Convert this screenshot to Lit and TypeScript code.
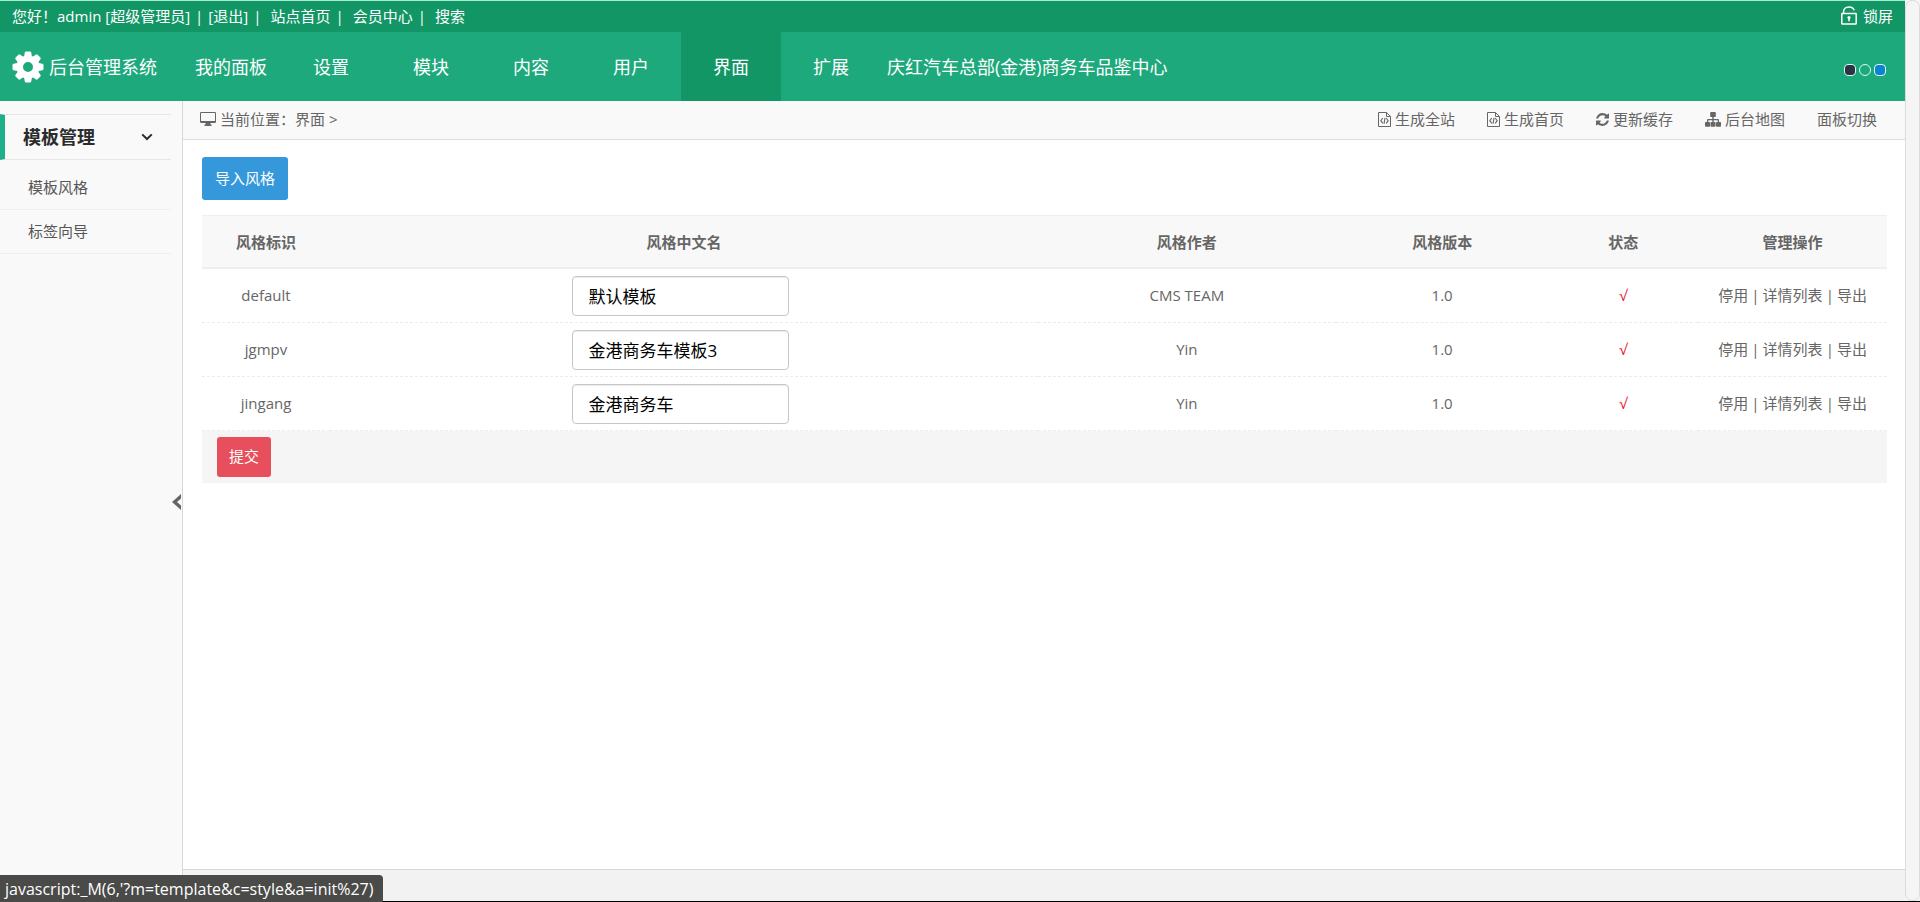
import { LitElement, html, css, svg } from "lit";
import { customElement, state } from "lit/decorators.js";
import { classMap } from "lit/directives/class-map.js";

interface StyleRow {
  id: string;
  name: string;
  author: string;
  version: string;
}

const NAV = ["我的面板", "设置", "模块", "内容", "用户", "界面", "扩展", "庆红汽车总部(金港)商务车品鉴中心"];

const ROWS: StyleRow[] = [
  { id: "default", name: "默认模板", author: "CMS TEAM", version: "1.0" },
  { id: "jgmpv", name: "金港商务车模板3", author: "Yin", version: "1.0" },
  { id: "jingang", name: "金港商务车", author: "Yin", version: "1.0" },
];

const TEETH = [0, 45, 90, 135, 180, 225, 270, 315];

const gearIcon = html`<svg class="gear" viewBox="0 0 32 32" aria-hidden="true">
  <g fill="currentColor">
    ${TEETH.map((a) => svg`<path transform="rotate(${a} 16 16)" d="M11.800 7 12.800 1.400Q13 .5 14 .5H18Q19 .5 19.200 1.400L20.200 7Z"/>`)}
    <path fill-rule="evenodd" d="M16 4.400a11.600 11.600 0 1 0 0 23.200 11.600 11.600 0 0 0 0-23.200Zm0 6.600a5 5 0 1 1 0 10 5 5 0 0 1 0-10Z"/>
  </g>
</svg>`;

const lockIcon = html`<svg class="lock" viewBox="0 0 16 19" aria-hidden="true">
  <g fill="none" stroke="currentColor" stroke-width="1.500">
    <path d="M2.500 8V6C2.500 3 4.800 1 8 1c2.600 0 4.600 1.300 5.200 3.400"/>
    <rect x=".8" y="7.500" width="14.400" height="10.500" rx=".6"/>
  </g>
  <circle cx="8" cy="11.600" r="1.600" fill="currentColor"/>
  <path d="M7.200 12h1.600v3.200H7.200z" fill="currentColor"/>
</svg>`;

const monitorIcon = html`<svg class="icon-wide" viewBox="0 0 16 14" aria-hidden="true">
  <path fill="currentColor" fill-rule="evenodd" d="M1.200 0h13.600Q16 0 16 1.200v8.600Q16 11 14.800 11H10.500v1.500h1V14h-7v-1.500h1V11H1.200Q0 11 0 9.800V1.200Q0 0 1.200 0ZM1 1v8h14V1Z"/>
</svg>`;

const codeIcon = html`<svg class="icon-file" viewBox="0 0 13 15" aria-hidden="true">
  <g fill="none" stroke="currentColor">
    <path d="M.5.5h8l4 4v10H.5Z"/>
    <path d="M8.500.5v4h4"/>
    <path d="M4.800 6 2.800 8.700l2 2.700M8.200 6l2 2.700-2 2.700M7 5.800 6 11.800" stroke-width="1.100"/>
  </g>
</svg>`;

const refreshIcon = html`<svg class="icon-file" viewBox="0 0 1536 1536" aria-hidden="true">
  <path fill="currentColor" d="M1511 928q0 5-1 7-64 268-268 434.500T764 1536q-146 0-282.500-55T238 1324l-129 129q-19 19-45 19t-45-19-19-45V960q0-26 19-45t45-19h448q26 0 45 19t19 45-19 45l-137 137q71 66 161 102t187 36q134 0 250-65t186-179q11-17 53-117 8-23 30-23h192q13 0 22.500 9.500t9.500 22.500zm25-800v448q0 26-19 45t-45 19h-448q-26 0-45-19t-19-45 19-45l138-138Q969 256 768 256q-134 0-250 65T332 500q-11 17-53 117-8 23-30 23H50q-13 0-22.500-9.500T18 608v-7q65-268 270-434.500T768 0q146 0 284 55.500T1297 212l130-129q19-19 45-19t45 19 19 45z"/>
</svg>`;

const sitemapIcon = html`<svg class="icon-tree" viewBox="0 0 16 15" aria-hidden="true">
  <path fill="currentColor" d="M6 0h4q.8 0 .8.8v3.400q0 .8-.8.8H8.700v2H13q1 0 1 1v2h1.200q.8 0 .8.8v3.200q0 .8-.8.8h-3.400q-.8 0-.8-.8v-3.200q0-.8.8-.8h.9V8.300H8.700V10h1q.8 0 .8.8v3.200q0 .8-.8.8H6.300q-.8 0-.8-.8v-3.200q0-.8.8-.8h1V8.300h-4V10h.9q.8 0 .8.8v3.200q0 .8-.8.8H.8Q0 14.800 0 14v-3.200Q0 10 .8 10H2V8q0-1 1-1h4.300V5H6q-.8 0-.8-.8V.8Q5.200 0 6 0Z"/>
</svg>`;

@customElement("app-root")
export class AppRoot extends LitElement {
  @state() private active = 5;

  static styles = css`
    :host {
      display: flex;
      flex-direction: column;
      box-sizing: border-box;
      min-height: 100vh;
      border-bottom: 1px solid #000;
      background: #f5f5f6;
      color: #666;
      font: 15px/20px "Open Sans", "Noto Sans CJK SC", sans-serif;
    }
    * { box-sizing: border-box; }
    a { color: inherit; text-decoration: none; }
    svg { display: block; flex: none; }
    button, input { font-family: inherit; }

    .shell { flex: 1; display: flex; }
    .page { flex: 1; min-width: 0; display: flex; flex-direction: column; }
    .scroll {
      width: 15px;
      border: 1px solid #dcdcdc;
      border-radius: 7px;
      background: #f5f5f5;
    }

    .top {
      display: flex;
      align-items: center;
      height: 32px;
      padding: 0 12px 2px;
      border-top: 1px solid #a5ebcf;
      background: #139666;
      color: #fff;
    }
    .top-links { display: flex; gap: 5px; white-space: pre; }
    .top-links .wide { margin-left: 4px; }
    .lock-link { margin-left: auto; display: flex; align-items: center; gap: 6px; }
    .lock { width: 16px; height: 19px; }

    .head {
      display: flex;
      align-items: stretch;
      height: 69px;
      background: #1ea97c;
      color: #fff;
      font-size: 18px;
    }
    .brand { width: 181px; display: flex; align-items: center; gap: 5px; padding-left: 12px; }
    .gear { width: 32px; height: 32px; }
    .nav { display: flex; }
    .nav a {
      min-width: 100px;
      padding: 0 6px;
      display: flex;
      align-items: center;
      justify-content: center;
      white-space: nowrap;
    }
    .nav .on { background: #139666; }
    .skins { margin-left: auto; display: flex; align-items: center; gap: 3px; padding: 6px 19px 0 0; }
    .skin {
      width: 12px;
      height: 12px;
      padding: 0;
      border: 1px solid #d5fff0;
      border-radius: 4px;
      background: #2b3346;
    }
    .skin.green { border-radius: 50%; background: #1ea97c; }
    .skin.blue { background: #0d82d0; }

    .body { flex: 1; display: flex; }
    .side {
      position: relative;
      width: 183px;
      padding-top: 13px;
      border-right: 1px solid #d8d8d8;
      background: #f9f9f9;
    }
    .side-title {
      width: 171px;
      height: 46px;
      margin: 0;
      padding: 0 18px;
      display: flex;
      align-items: center;
      justify-content: space-between;
      border: solid #e6e6e6;
      border-width: 1px 0;
      border-left: 5px solid #1fb08a;
      color: #2b2b2b;
      font-size: 18px;
    }
    .side-list { width: 171px; margin: 0; padding: 6px 0 0; list-style: none; }
    .side-list a {
      display: flex;
      align-items: center;
      height: 44px;
      padding: 0 0 2px 28px;
      border-bottom: 1px solid #efefef;
      color: #555;
    }
    .chev { width: 12px; height: 8px; }
    .fold {
      position: absolute;
      right: 1px;
      top: calc(50% - 7px);
      padding: 0;
      border: 0;
      background: none;
      color: #666;
    }

    .main { flex: 1; min-width: 0; display: flex; flex-direction: column; background: #fff; }
    .crumbs {
      display: flex;
      align-items: center;
      height: 39px;
      padding: 0 28px 2px 17px;
      border-bottom: 1px solid #dcdcdc;
      background: #f9f9f9;
    }
    .where { display: flex; align-items: center; gap: 4px; }
    .tools { margin-left: auto; display: flex; gap: 32px; }
    .tools a { display: flex; align-items: center; gap: 4px; }
    .icon-wide { width: 16px; height: 14px; }
    .icon-file { width: 13px; height: 15px; }
    .icon-tree { width: 16px; height: 15px; }

    .content { flex: 1; padding: 17px 18px 17px 19px; }
    .btn {
      display: block;
      border: 0;
      border-radius: 3px;
      color: #fff;
      font-size: 15px;
      line-height: 20px;
    }
    .btn.import { height: 43px; padding: 0 13px 2px; margin-bottom: 15px; background: #3498db; }
    .btn.submit { height: 40px; padding: 0 12px 2px; background: #e84f5c; }

    table { width: 100%; border-collapse: separate; border-spacing: 0; table-layout: fixed; text-align: center; }
    .c1 { width: 7.6%; }
    .c2 { width: 42%; }
    .c3 { width: 17.7%; }
    .c4 { width: 12.6%; }
    .c5 { width: 8.9%; }
    .c6 { width: 11.2%; }
    th, td { height: 54px; padding: 0; }
    th {
      border-top: 1px solid #efefef;
      border-bottom: 2px solid #efefef;
      background: #f8f8f8;
    }
    td { padding-bottom: 2px; border-bottom: 1px dashed #ececec; }
    td.edit { padding-bottom: 0; }
    .ok { color: #e6212f; }
    .ops { display: flex; justify-content: center; gap: 3px; }
    .field {
      display: inline-block;
      width: 217px;
      height: 40px;
      margin-right: 6px;
      padding: 0 15px;
      border: 1px solid #c3c7ca;
      border-radius: 4px;
      box-shadow: inset 0 1px 1px rgba(0, 0, 0, 0.08);
      background: #fff;
      color: #000;
      font-size: 17px;
      vertical-align: middle;
    }
    tfoot td { height: 52px; padding: 0 0 0 15px; border: 0; background: #f5f5f5; }

    .foot { height: 32px; border-top: 1px solid #d6d6d6; background: #f2f2f2; }
    .status {
      position: fixed;
      left: 0;
      bottom: 0;
      height: 27px;
      padding: 4px 10px 0 5px;
      border-top-right-radius: 4px;
      background: #4a4a48;
      color: #fff;
      font-size: 16px;
      white-space: nowrap;
    }
  `;

  render() {
    return html`
      <div class="shell">
        <div class="page">
          <div class="top">
            <div class="top-links"><span>您好！admin [超级管理员]</span><span>|</span><a href="#">[退出]</a><span>|</span><a class="wide" href="#">站点首页</a><span>|</span><a class="wide" href="#">会员中心</a><span>|</span><a class="wide" href="#">搜索</a></div>
            <a class="lock-link" href="#">${lockIcon}锁屏</a>
          </div>
          <header class="head">
            <div class="brand">${gearIcon}<span>后台管理系统</span></div>
            <nav class="nav">
              ${NAV.map((label, i) => html`<a href="#" class=${classMap({ on: i === this.active })}
                @click=${(e: Event) => { e.preventDefault(); this.active = i; }}>${label}</a>`)}
            </nav>
            <div class="skins">
              <button class="skin" aria-label="深色"></button>
              <button class="skin green" aria-label="绿色"></button>
              <button class="skin blue" aria-label="蓝色"></button>
            </div>
          </header>
          <div class="body">
            <aside class="side">
              <h2 class="side-title">模板管理
                <svg class="chev" viewBox="0 0 12 8" aria-hidden="true"><path d="M1.200 1.400 6 6l4.800-4.600" fill="none" stroke="currentColor" stroke-width="2"/></svg>
              </h2>
              <ul class="side-list">
                <li><a href="#">模板风格</a></li>
                <li><a href="#">标签向导</a></li>
              </ul>
              <button class="fold" aria-label="收起">
                <svg width="9" height="16" viewBox="0 0 9 16" aria-hidden="true"><path d="M9 0v4.500L5 8l4 3.500V16L0 8Z" fill="currentColor"/></svg>
              </button>
            </aside>
            <main class="main">
              <div class="crumbs">
                <div class="where">${monitorIcon}<span>当前位置：界面 &gt;</span></div>
                <div class="tools">
                  <a href="#">${codeIcon}生成全站</a>
                  <a href="#">${codeIcon}生成首页</a>
                  <a href="#">${refreshIcon}更新缓存</a>
                  <a href="#">${sitemapIcon}后台地图</a>
                  <a href="#">面板切换</a>
                </div>
              </div>
              <div class="content">
                <button class="btn import">导入风格</button>
                <table>
                  <colgroup><col class="c1"><col class="c2"><col class="c3"><col class="c4"><col class="c5"><col class="c6"></colgroup>
                  <thead>
                    <tr><th>风格标识</th><th>风格中文名</th><th>风格作者</th><th>风格版本</th><th>状态</th><th>管理操作</th></tr>
                  </thead>
                  <tbody>
                    ${ROWS.map((r) => html`<tr>
                      <td>${r.id}</td>
                      <td class="edit"><input class="field" type="text" aria-label="风格中文名" .value=${r.name}></td>
                      <td>${r.author}</td>
                      <td>${r.version}</td>
                      <td class="ok">√</td>
                      <td><div class="ops"><a href="#">停用</a><span>|</span><a href="#">详情列表</a><span>|</span><a href="#">导出</a></div></td>
                    </tr>`)}
                  </tbody>
                  <tfoot>
                    <tr><td colspan="6"><button class="btn submit">提交</button></td></tr>
                  </tfoot>
                </table>
              </div>
              <div class="foot"></div>
            </main>
          </div>
        </div>
        <div class="scroll"></div>
      </div>
      <div class="status">javascript:_M(6,'?m=template&amp;c=style&amp;a=init%27)</div>
    `;
  }
}
